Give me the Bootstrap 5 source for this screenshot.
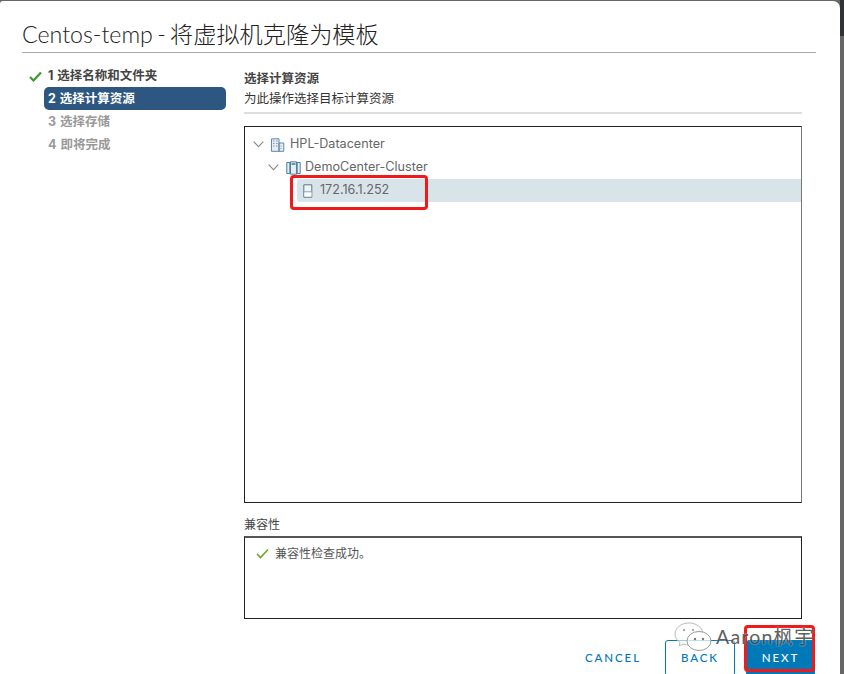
<!DOCTYPE html>
<html lang="zh">
<head>
<meta charset="utf-8">
<title>Clone</title>
<link rel="stylesheet" href="https://cdn.jsdelivr.net/npm/bootstrap@5.3.0/dist/css/bootstrap.min.css">
<style>
html,body{height:674px;overflow:hidden;}
body{background:#666;font-family:"Inter","Noto Sans CJK SC",sans-serif;color:#333;position:relative;}
.dlg{width:840px;height:674px;margin-top:1px;background:#fff;border-top-right-radius:7px;border-top-left-radius:3px;padding:0 24px 0 22px;position:relative;}
.dlg-top{height:52px;border-bottom:1px solid #a9a9a9;display:flex;align-items:flex-end;}
.dlg-title{font-size:23.2px;line-height:36px;font-weight:300;color:#222;margin:0;font-family:"Lato","Noto Sans CJK SC",sans-serif;letter-spacing:0;word-spacing:-2px;}
.dlg-body{display:flex;}
.steps{width:204px;padding:11px 0 0 22px;flex:none;list-style:none;margin:0;}
.steps li{height:23px;line-height:23px;font-size:12.5px;font-weight:700;padding-left:4px;color:#999;position:relative;white-space:nowrap;word-spacing:1px;}
.steps li.done{color:#444;}
.steps li.on{background:#2d5680;color:#fff;border-radius:5px;}
.chk{position:absolute;left:-15px;top:7px;}
.main{margin-left:18px;width:558px;flex:none;}
.sec-head{padding-top:16px;height:61px;border-bottom:2px solid #ddd;font-size:12.5px;line-height:20px;}
.sec-head div:first-child{font-weight:700;color:#444;}
.sec-head div:last-child{color:#333;}
.tree{margin-top:12px;height:377px;border:1px solid #222;border-right-color:#777;padding-top:6px;}
.node{height:23px;display:flex;align-items:center;font-size:12.6px;color:#666;white-space:nowrap;}
.lvl1{padding-left:8px;}
.lvl2{padding-left:23px;}
.lvl3{margin-left:52px;padding-left:6px;background:#d9e4ea;border-radius:3px 0 0 3px;}
.node svg{flex:none;}
.node .tw{margin-right:7px;}
.lvl1 .tw{margin-right:6px;}
.node .ic{margin-right:4px;}
.lvl1 .ic{margin-right:5px;}
.lvl3 .ic{margin-right:7px;}
.compat-l{font-size:12px;line-height:16px;margin-top:14px;padding-bottom:3px;color:#444;}
.compat{height:83px;border:1px solid #222;border-top:2px solid #555;padding:7px 11px;font-size:12px;line-height:18px;color:#555;display:flex;align-items:flex-start;gap:6px;}
.compat svg{margin-top:3px;}
.foot{position:absolute;left:0;right:0;top:639px;display:flex;justify-content:flex-end;align-items:flex-start;padding-right:25px;}
.foot .btn{height:36px;font-size:11.5px;letter-spacing:1.9px;font-weight:500;border-radius:3px;padding:0;line-height:34px;text-transform:uppercase;font-family:"Lato",sans-serif;}
.b-c{width:78px;color:#0079b8;margin-right:13px;border:0;}
.b-b{width:70px;color:#0079b8;border:1px solid #0079b8;margin-right:11px;background:#fff;}
.b-n{width:69px;color:#fff;background:#0079b8;border:1px solid #0079b8;}
.redbox{position:absolute;border:3px solid #f01a1a;border-radius:4px;}
.r1{left:290px;top:175px;width:138px;height:35px;}
.r2{left:744px;top:625px;width:71px;height:47px;}
.wm{position:absolute;left:716px;top:624px;font-size:19.5px;line-height:26px;color:#444;font-family:"Lato","Noto Sans CJK SC",sans-serif;letter-spacing:1.2px;text-shadow:0 0 2px #fff;white-space:nowrap;opacity:.85;}
.wmi{position:absolute;left:672px;top:620px;}
.strip{position:absolute;right:0;top:0;width:4px;height:36px;background:#2f3338;}
</style>
</head>
<body>
<div class="strip"></div>
<div class="dlg">
  <div class="dlg-top"><h1 class="dlg-title">Centos-temp - 将虚拟机克隆为模板</h1></div>
  <div class="dlg-body">
    <ol class="steps">
      <li class="done"><svg class="chk" width="13" height="11" viewBox="0 0 13 11"><path d="M1 6l3.5 3.5L12 1.5" fill="none" stroke="#3c9a2e" stroke-width="2.2"/></svg>1 选择名称和文件夹</li>
      <li class="on">2 选择计算资源</li>
      <li>3 选择存储</li>
      <li>4 即将完成</li>
    </ol>
    <div class="main">
      <div class="sec-head"><div>选择计算资源</div><div>为此操作选择目标计算资源</div></div>
      <div class="tree">
        <div class="node lvl1">
          <svg class="tw" width="11" height="7" viewBox="0 0 11 7"><path d="M.7.7l4.8 5 4.8-5" fill="none" stroke="#888" stroke-width="1.1"/></svg>
          <svg class="ic" width="15" height="14" viewBox="0 0 15 14"><path d="M1.5.8h7.5v12.5H1.5zM9 5h4.8v8.3H9z" fill="#e6edf2" stroke="#5f8aa6"/><path d="M3 3h1.5M6 3h1.5M3 5.5h1.5M6 5.5h1.5M3 8h1.5M6 8h1.5M11 7.5v1M11 10v1" stroke="#7b9db3"/></svg>
          HPL-Datacenter</div>
        <div class="node lvl2">
          <svg class="tw" width="11" height="7" viewBox="0 0 11 7"><path d="M.7.7l4.8 5 4.8-5" fill="none" stroke="#888" stroke-width="1.1"/></svg>
          <svg class="ic" width="15" height="14" viewBox="0 0 15 14"><path d="M.8 1.5h3v11h-3zM11.2 1.5h3v11h-3zM4.500.8h6v12.400h-6z" fill="#e6edf2" stroke="#4f7f9c"/><path d="M5.500 3h4" stroke="#4f7f9c" stroke-width="1.600"/></svg>
          DemoCenter-Cluster</div>
        <div class="node lvl3">
          <svg class="ic" width="10" height="14" viewBox="0 0 10 14"><path d="M.8.8h8v12.400h-8z" fill="#eef3f6" stroke="#54788f"/><path d="M1.500 8h7v4.500h-7z" fill="#fff"/><path d="M1 7.800h8" stroke="#8aa5b6"/></svg>
          172.16.1.252</div>
      </div>
      <div class="compat-l">兼容性</div>
      <div class="compat"><svg width="13" height="11" viewBox="0 0 13 11"><path d="M1 6l3.500 3.500L12 1.500" fill="none" stroke="#6ca62e" stroke-width="1.600"/></svg>兼容性检查成功。</div>
    </div>
  </div>
  <div class="foot">
    <button class="btn b-c" type="button">Cancel</button>
    <button class="btn b-b" type="button">Back</button>
    <button class="btn b-n" type="button">Next</button>
  </div>
</div>
<div class="redbox r1"></div>
<div class="redbox r2"></div>
<svg class="wmi" width="42" height="34" viewBox="0 0 42 34"><path d="M17 3C9 3 3 8 3 14c0 3.500 2 6.500 5 8.500L7 26l4-2c2 .6 4 1 6 1" fill="rgba(255,255,255,.6)" stroke="#bbb"/><path d="M17 3c7 0 13 4 14 10" fill="none" stroke="#bbb"/><ellipse cx="27" cy="21" rx="12" ry="9.500" fill="rgba(255,255,255,.75)" stroke="#999"/><circle cx="23" cy="19" r="1.200" fill="#777"/><circle cx="31" cy="19" r="1.200" fill="#777"/><circle cx="12" cy="10" r="1.200" fill="#aaa"/><circle cx="21" cy="10" r="1.200" fill="#aaa"/></svg>
<div class="wm">Aaron枫宇</div>
<script src="https://cdn.jsdelivr.net/npm/bootstrap@5.3.0/dist/js/bootstrap.bundle.min.js"></script>
</body>
</html>
